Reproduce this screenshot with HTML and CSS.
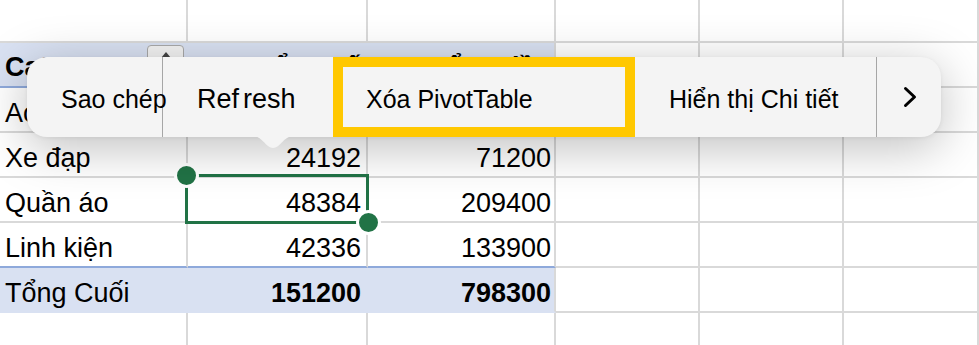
FILE: index.html
```html
<!DOCTYPE html>
<html lang="vi">

<head>
    <meta charset="UTF-8">
    <meta name="viewport" content="width=device-width, initial-scale=1.0">
    <link rel="stylesheet" href="styles.css">
</head>

<body>
    <div class="sheet">
        <div class="row row-top">
            <div class="cell"></div>
            <div class="cell"></div>
            <div class="cell"></div>
            <div class="cell"></div>
            <div class="cell"></div>
            <div class="cell"></div>
        </div>
        <div class="row">
            <div class="cell pv-head">Category</div>
            <div class="cell pv-head num">Tổng số</div>
            <div class="cell pv-head num col-c">Tổng tiền</div>
            <div class="cell"></div>
            <div class="cell"></div>
            <div class="cell"></div>
        </div>
        <div class="row">
            <div class="cell">Ac</div>
            <div class="cell num"></div>
            <div class="cell num col-c"></div>
            <div class="cell"></div>
            <div class="cell"></div>
            <div class="cell"></div>
        </div>
        <div class="row">
            <div class="cell">Xe đạp</div>
            <div class="cell num">24192</div>
            <div class="cell num col-c">71200</div>
            <div class="cell"></div>
            <div class="cell"></div>
            <div class="cell"></div>
        </div>
        <div class="row">
            <div class="cell">Quần áo</div>
            <div class="cell num">48384</div>
            <div class="cell num col-c">209400</div>
            <div class="cell"></div>
            <div class="cell"></div>
            <div class="cell"></div>
        </div>
        <div class="row">
            <div class="cell pre-total">Linh kiện</div>
            <div class="cell pre-total num">42336</div>
            <div class="cell pre-total num col-c">133900</div>
            <div class="cell"></div>
            <div class="cell"></div>
            <div class="cell"></div>
        </div>
        <div class="row">
            <div class="cell pv-total">Tổng Cuối</div>
            <div class="cell pv-total num bold">151200</div>
            <div class="cell pv-total num col-c bold">798300</div>
            <div class="cell"></div>
            <div class="cell"></div>
            <div class="cell"></div>
        </div>
        <div class="row">
            <div class="cell"></div>
            <div class="cell"></div>
            <div class="cell"></div>
            <div class="cell"></div>
            <div class="cell"></div>
            <div class="cell"></div>
        </div>

        <!-- overlays -->
        <div class="filter-btn"><span class="filter-arrow"></span></div>
        <div class="selection"></div>
        <span class="handle handle-tl"></span>
        <span class="handle handle-br"></span>

        <div class="menu">
            <div class="menu-item item-copy">Sao chép</div>
            <div class="menu-item item-refresh">Ref<span class="gap">resh</span></div>
            <div class="menu-item item-delete">Xóa PivotTable</div>
            <div class="menu-item item-details">Hiển thị Chi tiết</div>
            <div class="menu-item item-more">
                <svg width="14" height="22" viewBox="0 0 14 22">
                    <polyline points="2.5,2.5 11.5,11 2.5,19.5" fill="none" stroke="#000" stroke-width="3"
                        stroke-linecap="round" stroke-linejoin="round" />
                </svg>
            </div>
            <svg class="menu-tail" width="40" height="14" viewBox="0 0 40 14">
                <path d="M0 0 C9 0 13 12 20 12 C27 12 31 0 40 0 Z" fill="#f4f4f4" />
            </svg>
        </div>
    </div>
</body>

</html>
```

FILE: styles.css
```css
body {
    margin: 0;
    padding: 0;
    background-color: #fff;
    font-family: "Liberation Sans", Arial, sans-serif;
}

.sheet {
    position: relative;
    width: 979px;
    height: 345px;
    overflow: hidden;
}

.row {
    display: grid;
    grid-template-columns: 188px 180px 188px 144px 144px 1fr;
    height: 45px;
}

.row-top {
    height: 43px;
}

.cell {
    box-sizing: border-box;
    border-right: 2px solid #d9d9d9;
    border-bottom: 2px solid #d9d9d9;
    padding: 10px 0 0 5px;
    font-size: 27px;
    line-height: 31px;
    color: #000;
    white-space: nowrap;
    overflow: hidden;
}

.num {
    text-align: right;
    padding-left: 0;
    padding-right: 5px;
}

.num.col-c {
    padding-right: 3px;
}

.bold {
    font-weight: bold;
}

/* pivot header */
.pv-head {
    background-color: #d9e1f2;
    border-right-color: #d9e1f2;
    border-bottom-color: #8ea9db;
    font-weight: bold;
    padding-top: 9px;
}

.pv-head.col-c,
.pv-total.col-c {
    border-right-color: #d9d9d9;
}

.pre-total {
    border-bottom-color: #8ea9db;
}

.pv-total {
    background-color: #d9e1f2;
    border-right-color: #d9e1f2;
    border-bottom-color: #d9e1f2;
}

/* filter button in header */
.filter-btn {
    position: absolute;
    left: 147px;
    top: 45px;
    width: 37px;
    height: 30px;
    box-sizing: border-box;
    border: 1px solid #a9a9a9;
    border-radius: 4px;
    background-color: #f3f3f3;
}

.filter-arrow {
    position: absolute;
    left: 13px;
    top: 6px;
    width: 0;
    height: 0;
    border-left: 5px solid transparent;
    border-right: 5px solid transparent;
    border-bottom: 6px solid #444;
}

/* selection */
.selection {
    position: absolute;
    left: 185px;
    top: 174px;
    width: 184px;
    height: 50px;
    box-sizing: border-box;
    border: 3px solid #217346;
}

.handle {
    position: absolute;
    width: 19px;
    height: 19px;
    border-radius: 50%;
    background-color: #217346;
    border: 3px solid #fff;
}

.handle-tl {
    left: 174px;
    top: 163px;
}

.handle-br {
    left: 356px;
    top: 210px;
}

/* context menu */
.menu {
    position: absolute;
    left: 27px;
    top: 57px;
    width: 914px;
    height: 80px;
    display: flex;
    background-color: #f4f4f4;
    border-radius: 20px;
    box-shadow: 0 10px 50px rgba(0, 0, 0, 0.26), 0 1px 4px rgba(0, 0, 0, 0.06);
}

.menu-item {
    box-sizing: border-box;
    display: flex;
    align-items: center;
    padding-top: 4px;
    padding-left: 34px;
    font-size: 25px;
    color: #000;
    white-space: nowrap;
}

.item-copy {
    width: 136px;
    border-right: 1px solid #a6a6a6;
}

.item-refresh {
    width: 170px;
    font-size: 27px;
}

.gap {
    margin-left: 4px;
}

.item-delete {
    width: 302px;
    border: 10px solid #ffc800;
    padding-left: 23px;
}

.item-details {
    width: 242px;
    border-right: 1px solid #a6a6a6;
}

.item-more {
    width: 64px;
    padding: 0 0 0 1px;
    justify-content: center;
}

.menu-tail {
    position: absolute;
    left: 226px;
    top: 79px;
}
```
